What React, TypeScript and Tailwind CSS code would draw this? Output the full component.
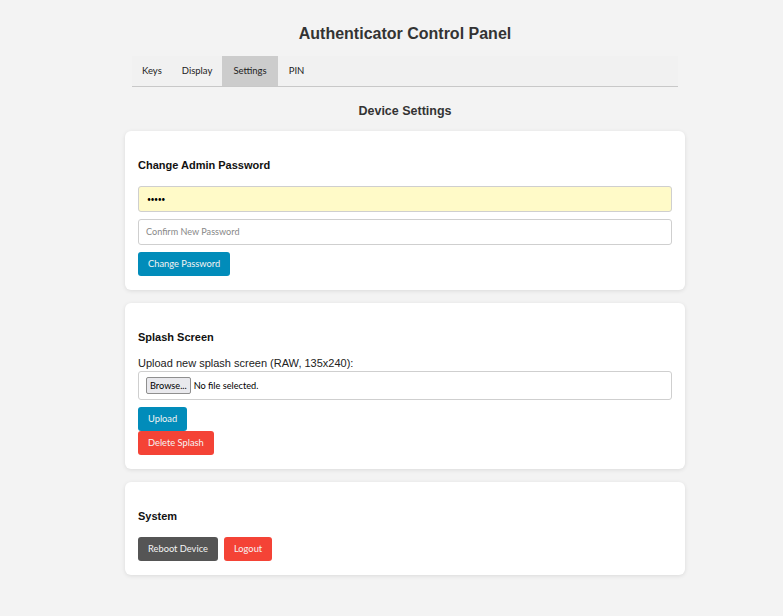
import React from "react";

const ui = "font-['Lato',sans-serif]";

const Card: React.FC<{ title: string; children: React.ReactNode }> = ({ title, children }) => (
  <div className="bg-white rounded-[6px] shadow-[0_1px_4px_rgba(0,0,0,0.1)] px-[13px] pt-[13px] pb-[14px]">
    <h3 className="font-['Liberation_Sans',Arial,sans-serif] font-bold text-[11px] leading-[14px] text-[#111] mt-[14px] mb-[14px]">
      {title}
    </h3>
    {children}
  </div>
);

const Btn: React.FC<{ color: string; children: React.ReactNode }> = ({ color, children }) => (
  <button className={`${ui} ${color} text-[#f4f4f4] text-[9.3px] h-[24px] px-[10px] rounded-[3px]`}>{children}</button>
);

const App: React.FC = () => (
  <div className="min-h-screen bg-[#f3f3f3] pb-10 pl-[27px]">
    <h1 className="font-['Liberation_Sans',Arial,sans-serif] font-bold text-[16px] leading-[20px] text-[#333] text-center pt-[24px]">
      Authenticator Control Panel
    </h1>
    <div className={`${ui} mt-[12px] mx-auto w-[546px] h-[31px] bg-[#f1f1f1] border-b border-[#c8c8c8] flex text-[9.5px] text-[#222]`}>
      <div className="px-[10px] flex items-center">Keys</div>
      <div className="px-[10px] flex items-center">Display</div>
      <div className="px-[11px] flex items-center bg-[#cccccc]">Settings</div>
      <div className="px-[11px] flex items-center">PIN</div>
    </div>
    <h2 className="font-['Liberation_Sans',Arial,sans-serif] font-bold text-[12.5px] leading-[16px] text-[#333] text-center mt-[16px] mb-[12px]">
      Device Settings
    </h2>
    <div className="w-[560px] mx-auto flex flex-col gap-[13px]">
      <Card title="Change Admin Password">
        <div className="flex flex-col items-start gap-[7px]">
          <div className={`${ui} w-full h-[26px] bg-[#fffac8] border border-[#cfcfcf] rounded-[3px] px-[8px] flex items-center text-[7px] text-black tracking-[-0.5px]`}>
            •••••
          </div>
          <div className={`${ui} w-full h-[26px] bg-white border border-[#cfcfcf] rounded-[3px] px-[7px] flex items-center text-[9.1px] text-[#888]`}>
            Confirm New Password
          </div>
          <Btn color="bg-[#018cba]">Change Password</Btn>
        </div>
      </Card>
      <Card title="Splash Screen">
        <div className="font-['Liberation_Sans',Arial,sans-serif] text-[11px] leading-[15px] text-[#222] -mt-[2px]">
          Upload new splash screen (RAW, 135x240):
        </div>
        <div className={`${ui} h-[29px] border border-[#cfcfcf] rounded-[3px] px-[7px] flex items-center gap-[3px] text-[9.2px] text-black`}>
          <span className="border border-[#8f8f8f] bg-[#e9e9ed] rounded-[2px] px-[3px] h-[17px] flex items-center">Browse...</span>
          <span>No file selected.</span>
        </div>
        <div className="mt-[7px] flex flex-col items-start">
          <Btn color="bg-[#018cba]">Upload</Btn>
          <Btn color="bg-[#f44336]">Delete Splash</Btn>
        </div>
      </Card>
      <Card title="System">
        <div className="flex gap-[6px]">
          <Btn color="bg-[#555555]">Reboot Device</Btn>
          <Btn color="bg-[#f44336]">Logout</Btn>
        </div>
      </Card>
    </div>
  </div>
);

export default App;
